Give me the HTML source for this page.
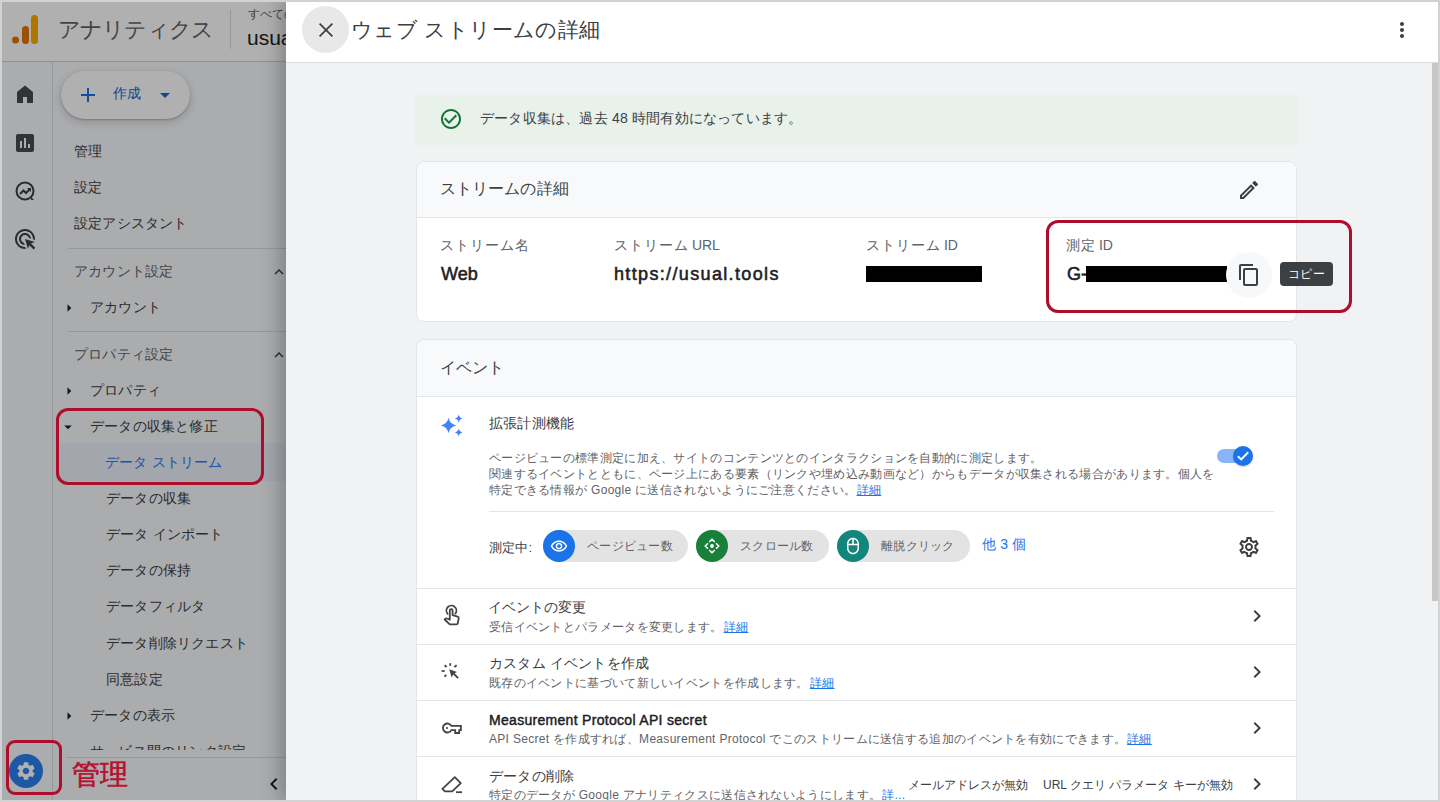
<!DOCTYPE html>
<html lang="ja">
<head>
<meta charset="utf-8">
<style>
*{box-sizing:border-box;margin:0;padding:0}
html,body{width:1440px;height:802px;overflow:hidden;background:#fff}
body{font-family:"Liberation Sans",sans-serif;color:#3c4043;position:relative}
.a{position:absolute;white-space:nowrap}
svg{display:block}
/* base page */
#base{position:absolute;left:0;top:0;width:286px;height:802px;background:#f8fafd;overflow:hidden}
#overlay{position:absolute;left:0;top:0;width:286px;height:802px;background:rgba(0,0,0,0.31)}
.nav{font-size:14px;letter-spacing:0.2px;color:#3c4043}
.sec{font-size:14px;letter-spacing:0.2px;color:#5f6368}
/* drawer */
#drawer{position:absolute;left:286px;top:0;width:1154px;height:802px;background:#f1f2f4;overflow:hidden;box-shadow:-6px 0 18px rgba(0,0,0,0.25)}
#dhead{position:absolute;left:0;top:0;width:1154px;height:63px;background:#fff;border-bottom:1px solid #dadce0}
.card{position:absolute;left:130px;width:881px;background:#fff;border:1px solid #e3e5e8;border-radius:8px;overflow:hidden}
.chead{position:absolute;left:0;top:0;width:100%;background:#f8f9fa;border-bottom:1px solid #e3e5e8}
.lbl{font-size:14px;color:#5f6368;letter-spacing:1px}
.val{font-size:18px;font-weight:normal;color:#202124;-webkit-text-stroke:0.55px #202124}
.t14{font-size:14px;letter-spacing:0.2px;color:#3c4043}
.t12{font-size:12px;letter-spacing:0.3px;color:#5f6368}
.link{color:#1a73e8;text-decoration:underline}
.row{position:absolute;left:0;width:100%;height:56px;border-top:1px solid #e3e5e8}
.chip{position:absolute;top:0;height:32px;border-radius:16px;background:#e3e3e3}
.chip .ic{position:absolute;left:0;top:0;width:32px;height:32px;border-radius:16px}
.chip .tx{position:absolute;left:44px;top:8px;font-size:12px;letter-spacing:0.3px;color:#5f6368}
.redbox{position:absolute;border:3.8px solid #ad0e2c;border-radius:12px}
#frame{position:absolute;left:0;top:0;width:1440px;height:802px;border:2px solid #d2d2d2;border-right-width:2px;pointer-events:none}
</style>
</head>
<body>
<div id="base">
  <!-- header -->
  <div class="a" style="left:0;top:0;width:286px;height:62px;border-bottom:1px solid #d0d2d5;background:#fff"></div>
  <svg class="a" style="left:11px;top:14px" width="30" height="30" viewBox="0 0 30 30">
    <rect x="20" y="1" width="7" height="29" rx="3.5" fill="#f9ab00"/>
    <rect x="11" y="12" width="7" height="18" rx="3.5" fill="#e37400"/>
    <circle cx="4.5" cy="26" r="3.5" fill="#e37400"/>
  </svg>
  <div class="a" style="left:58px;top:15px;font-size:22px;color:#5f6368;letter-spacing:-0.85px">アナリティクス</div>
  <div class="a" style="left:230px;top:10px;width:1px;height:39px;background:#dadce0"></div>
  <div class="a" style="left:248px;top:6px;font-size:12px;color:#5f6368">すべてのアカウント</div>
  <div class="a" style="left:247px;top:26px;font-size:21px;color:#202124">usual.tools</div>
  <!-- rail -->
  <div class="a" style="left:52px;top:62px;width:1px;height:740px;background:#dadce0"></div>
  <svg class="a" style="left:13px;top:82px" width="24" height="24" viewBox="0 0 24 24"><path fill="#474a4e" d="M4 21V10l8-6.5L20 10v11h-6v-6h-4v6z"/></svg>
  <svg class="a" style="left:13px;top:131px" width="24" height="24" viewBox="0 0 24 24"><path fill="#474a4e" d="M19 3H5c-1.1 0-2 .9-2 2v14c0 1.1.9 2 2 2h14c1.1 0 2-.9 2-2V5c0-1.1-.9-2-2-2zM9 17H7v-7h2v7zm4 0h-2V7h2v10zm4 0h-2v-4h2v4z"/></svg>
  <svg class="a" style="left:13px;top:179px" width="24" height="24" viewBox="0 0 24 24"><circle cx="12" cy="12" r="8.5" fill="none" stroke="#3c4043" stroke-width="2"/><path d="M7 15l3.5-3.5 2.5 2.5 4-4" fill="none" stroke="#3c4043" stroke-width="2"/><path d="M14 9h4v4z" fill="#3c4043"/><path d="M18 18l3 3h-3z" fill="#3c4043"/></svg>
  <svg class="a" style="left:13px;top:227px" width="24" height="24" viewBox="0 0 24 24"><path fill="#3c4043" d="M11.71 17.99C8.53 17.84 6 15.22 6 12c0-3.31 2.69-6 6-6 3.22 0 5.840 2.53 5.99 5.71l-2.1-.63C15.48 9.31 13.89 8 12 8c-2.21 0-4 1.79-4 4 0 1.89 1.31 3.48 3.08 3.89l.63 2.1zM22 12c0 .3-.01.6-.04.9l-1.97-.59c.01-.1.01-.21.01-.31 0-4.42-3.58-8-8-8s-8 3.58-8 8 3.58 8 8 8c.1 0 .21 0 .31-.01l.59 1.97c-.3.03-.6.04-.9.04-5.52 0-10-4.48-10-10S6.48 2 12 2s10 4.48 10 10zm-3.77 4.26L22 15l-10-3 3 10 1.26-3.77 4.27 4.27 1.770-1.77-4.27-4.27z"/></svg>
  <!-- create button -->
  <div class="a" style="left:61px;top:71px;width:129px;height:48px;border-radius:24px;background:#fff;box-shadow:0 1px 2px rgba(0,0,0,0.22),0 3px 8px 2px rgba(0,0,0,0.12)"></div>
  <svg class="a" style="left:76px;top:83px" width="24" height="24" viewBox="0 0 24 24"><path fill="#1a73e8" d="M19 13h-6v6h-2v-6H5v-2h6V5h2v6h6v2z"/></svg>
  <div class="a" style="left:113px;top:85px;font-size:14px;color:#1967d2;letter-spacing:0.2px">作成</div>
  <svg class="a" style="left:153px;top:83px" width="24" height="24" viewBox="0 0 24 24"><path fill="#1967d2" d="M7 10l5 5 5-5z"/></svg>
  <!-- nav -->
  <div class="a nav" style="left:74px;top:143px">管理</div>
  <div class="a nav" style="left:74px;top:179px">設定</div>
  <div class="a nav" style="left:74px;top:215px">設定アシスタント</div>
  <div class="a" style="left:68px;top:248px;width:218px;height:1px;background:#dadce0"></div>
  <div class="a sec" style="left:74px;top:263px">アカウント設定</div>
  <svg class="a" style="left:270px;top:263px" width="18" height="18" viewBox="0 0 24 24"><path fill="#3c4043" d="M12 8l-6 6 1.41 1.41L12 10.83l4.59 4.58L18 14z"/></svg>
  <svg class="a" style="left:60px;top:299px" width="18" height="18" viewBox="0 0 24 24"><path fill="#202124" d="M10 17l5-5-5-5v10z"/></svg>
  <div class="a nav" style="left:90px;top:299px">アカウント</div>
  <div class="a" style="left:68px;top:331px;width:218px;height:1px;background:#dadce0"></div>
  <div class="a sec" style="left:74px;top:346px">プロパティ設定</div>
  <svg class="a" style="left:270px;top:346px" width="18" height="18" viewBox="0 0 24 24"><path fill="#3c4043" d="M12 8l-6 6 1.41 1.41L12 10.83l4.59 4.58L18 14z"/></svg>
  <svg class="a" style="left:60px;top:382px" width="18" height="18" viewBox="0 0 24 24"><path fill="#202124" d="M10 17l5-5-5-5v10z"/></svg>
  <div class="a nav" style="left:90px;top:382px">プロパティ</div>
  <svg class="a" style="left:59px;top:418px" width="18" height="18" viewBox="0 0 24 24"><path fill="#202124" d="M7 10l5 5 5-5z"/></svg>
  <div class="a nav" style="left:90px;top:418px">データの収集と修正</div>
  <div class="a" style="left:56px;top:443px;width:230px;height:38px;background:#ecf1fb"></div>
  <div class="a nav" style="left:105px;top:454px;color:#2a7af0">データ ストリーム</div>
  <div class="a nav" style="left:106px;top:490px">データの収集</div>
  <div class="a nav" style="left:106px;top:526px">データ インポート</div>
  <div class="a nav" style="left:106px;top:562px">データの保持</div>
  <div class="a nav" style="left:106px;top:598px">データフィルタ</div>
  <div class="a nav" style="left:106px;top:635px">データ削除リクエスト</div>
  <div class="a nav" style="left:106px;top:671px">同意設定</div>
  <svg class="a" style="left:60px;top:707px" width="18" height="18" viewBox="0 0 24 24"><path fill="#202124" d="M10 17l5-5-5-5v10z"/></svg>
  <div class="a nav" style="left:90px;top:707px">データの表示</div>
  <div class="a nav" style="left:90px;top:743px">サービス間のリンク設定</div>
  <div class="a" style="left:53px;top:750px;width:233px;height:52px;background:#f8fafd"></div>
  <div class="a" style="left:66px;top:757px;width:220px;height:1px;background:#dadce0"></div>
  <svg class="a" style="left:262px;top:772px" width="24" height="24" viewBox="0 0 24 24"><path fill="#202124" d="M15.41 7.41L14 6l-6 6 6 6 1.41-1.41L10.83 12z"/></svg>
  <div class="a" style="left:9px;top:754px;width:34px;height:34px;border-radius:17px;background:#2a80f0"></div>
  <svg class="a" style="left:15px;top:760px" width="22" height="22" viewBox="0 0 24 24"><path fill="#fff" d="M19.14 12.94c.04-.3.06-.61.06-.94 0-.32-.02-.64-.07-.94l2.03-1.58c.18-.14.23-.41.12-.61l-1.92-3.32c-.12-.22-.37-.29-.59-.22l-2.39.96c-.5-.38-1.030-.7-1.62-.94l-.36-2.54c-.04-.24-.24-.41-.48-.41h-3.84c-.24 0-.43.17-.47.41l-.36 2.54c-.59.24-1.13.57-1.62.94l-2.39-.96c-.22-.08-.47 0-.59.22L2.74 8.87c-.12.21-.08.47.12.61l2.03 1.58c-.05.3-.09.63-.09.94s.02.64.07.94l-2.03 1.58c-.18.14-.23.41-.12.61l1.92 3.32c.12.22.37.29.59.22l2.39-.96c.5.38 1.03.7 1.62.94l.36 2.54c.05.24.24.41.48.41h3.84c.24 0 .44-.17.47-.41l.36-2.54c.59-.24 1.13-.56 1.62-.94l2.39.96c.22.08.47 0 .59-.22l1.92-3.32c.12-.22.07-.47-.12-.61l-2.01-1.58zM12 15.6c-1.98 0-3.6-1.62-3.6-3.6s1.62-3.6 3.6-3.6 3.6 1.62 3.6 3.6-1.62 3.6-3.6 3.6z"/></svg>
</div>
<div id="overlay"></div>

<div id="drawer">
  <div id="dhead">
    <div class="a" style="left:16px;top:6px;width:47px;height:47px;border-radius:50%;background:#e8e8e8"></div>
    <svg class="a" style="left:28px;top:18px" width="24" height="24" viewBox="0 0 24 24"><path stroke="#3c4043" stroke-width="1.7" d="M5.6 5.6L18.4 18.4M18.4 5.6L5.6 18.4"/></svg>
    <div class="a" style="left:65px;top:16px;font-size:21px;color:#3c4043;letter-spacing:0.4px">ウェブ ストリームの詳細</div>
    <svg class="a" style="left:1104px;top:18px" width="24" height="24" viewBox="0 0 24 24"><path fill="#3c4043" d="M12 8c1.1 0 2-.9 2-2s-.9-2-2-2-2 .9-2 2 .9 2 2 2zm0 2c-1.1 0-2 .9-2 2s.9 2 2 2 2-.9 2-2-.9-2-2-2zm0 6c-1.1 0-2 .9-2 2s.9 2 2 2 2-.9 2-2-.9-2-2-2z"/></svg>
  </div>
  <!-- scrollbar -->
  <div class="a" style="left:1146px;top:63px;width:6px;height:538px;background:#c6c6c6"></div>
  <!-- green banner -->
  <div class="a" style="left:131px;top:97px;width:879px;height:46px;background:#e8f1ea;box-shadow:0 0 3px 2px #e9f1eb"></div>
  <svg class="a" style="left:153px;top:107px" width="24" height="24" viewBox="0 0 24 24"><path fill="#137333" d="M16.59 7.58L10 14.17l-3.59-3.58L5 12l5 5 8-8zM12 2C6.48 2 2 6.480 2 12s4.48 10 10 10 10-4.48 10-10S17.52 2 12 2zm0 18c-4.42 0-8-3.58-8-8s3.58-8 8-8 8 3.58 8 8-3.58 8-8 8z"/></svg>
  <div class="a t14" style="left:194px;top:110px">データ収集は、過去 48 時間有効になっています。</div>

  <!-- stream details card -->
  <div class="card" style="top:161px;height:161px">
    <div class="chead" style="height:56px"></div>
    <div class="a" style="left:23px;top:17px;font-size:16px;color:#3c4043;letter-spacing:0.1px">ストリームの詳細</div>
    <svg class="a" style="left:820px;top:16px" width="24" height="24" viewBox="0 0 24 24"><path fill="#3c4043" d="M14.06 9.02l.92.92L5.92 19H5v-.92l9.06-9.06M17.66 3c-.25 0-.51.1-.7.29l-1.83 1.830 3.75 3.75 1.83-1.83c.39-.39.39-1.02 0-1.41l-2.34-2.34c-.2-.2-.45-.29-.71-.29zm-3.6 3.19L3 17.25V21h3.75L17.81 9.94l-3.75-3.75z"/></svg>
    <div class="a lbl" style="left:23px;top:75px">ストリーム名</div>
    <div class="a val" style="left:24px;top:102px">Web</div>
    <div class="a lbl" style="left:197px;top:75px">ストリーム<span style="letter-spacing:0;margin-left:-1px"> URL</span></div>
    <div class="a val" style="left:197px;top:102px;letter-spacing:1.35px">https://usual.tools</div>
    <div class="a lbl" style="left:449px;top:75px">ストリーム<span style="letter-spacing:0;margin-left:-1px"> ID</span></div>
    <div class="a" style="left:449px;top:104px;width:116px;height:16px;background:#000"></div>
    <div class="a lbl" style="left:649px;top:75px">測定<span style="letter-spacing:0;margin-left:-1px"> ID</span></div>
    <div class="a val" style="left:650px;top:102px">G-</div>
    <div class="a" style="left:669px;top:104px;width:141px;height:16px;background:#000"></div>
    <div class="a" style="left:809px;top:90px;width:46px;height:46px;border-radius:50%;background:#f7f8f9"></div>
    <svg class="a" style="left:820px;top:101px" width="24" height="24" viewBox="0 0 24 24"><path fill="#3c4043" d="M16 1H4c-1.1 0-2 .9-2 2v14h2V3h12V1zm3 4H8c-1.1 0-2 .9-2 2v14c0 1.1.9 2 2 2h11c1.1 0 2-.9 2-2V7c0-1.1-.9-2-2-2zm0 16H8V7h11v14z"/></svg>
  </div>
  <div class="a" style="left:994px;top:262px;width:53px;height:24px;border-radius:4px;background:#3c4043;color:#fff;font-size:12px;line-height:24px;text-align:center;letter-spacing:0.3px">コピー</div>

  <!-- events card -->
  <div class="card" style="top:339px;height:480px">
    <div class="chead" style="height:57px"></div>
    <div class="a" style="left:23px;top:18px;font-size:16px;color:#3c4043">イベント</div>
    <svg class="a" style="left:19px;top:68px" width="34" height="34" viewBox="0 0 34 34"><path fill="#4583f0" d="M12.5,9.799999999999999 Q13.868,16.032 20.1,17.4 Q13.868,18.767999999999997 12.5,25.0 Q11.132,18.767999999999997 4.9,17.4 Q11.132,16.032 12.5,9.799999999999999Z M22.7,6.4 Q23.419999999999998,9.68 26.7,10.4 Q23.419999999999998,11.120000000000001 22.7,14.4 Q21.98,11.120000000000001 18.7,10.4 Q21.98,9.68 22.7,6.4Z M22.7,20.7 Q23.366,23.733999999999998 26.4,24.4 Q23.366,25.066 22.7,28.099999999999998 Q22.034,25.066 19.0,24.4 Q22.034,23.733999999999998 22.7,20.7Z"/></svg>
    <div class="a t14" style="left:72px;top:75px">拡張計測機能</div>
    <div class="a t12" style="left:72px;top:110px;line-height:16px;white-space:normal;width:750px">ページビューの標準測定に加え、サイトのコンテンツとのインタラクションを自動的に測定します。<br>関連するイベントとともに、ページ上にある要素（リンクや埋め込み動画など）からもデータが収集される場合があります。個人を<br>特定できる情報が Google に送信されないようにご注意ください。<span class="link" style="color:#1a73e8">詳細</span></div>
    <!-- toggle -->
    <div class="a" style="left:800px;top:109px;width:30px;height:14px;border-radius:7px;background:#8ab4f8"></div>
    <div class="a" style="left:816px;top:106px;width:20px;height:20px;border-radius:50%;background:#1a73e8;box-shadow:0 1px 2px rgba(0,0,0,0.2)"></div>
    <svg class="a" style="left:818px;top:108px" width="16" height="16" viewBox="0 0 16 16"><path fill="none" stroke="#fff" stroke-width="2" d="M2.8 8.2L6.2 11.4L13.2 4.2"/></svg>
    <div class="a" style="left:72px;top:171px;width:785px;height:1px;background:#e3e5e8"></div>
    <div class="a t14" style="left:72px;top:199px;font-size:13px">測定中:</div>
    <div class="chip" style="left:126px;top:190px;width:145px"><div class="ic" style="background:#1a73e8"></div><svg class="a" style="left:7px;top:7px" width="18" height="18" viewBox="0 0 24 24"><path fill="#fff" d="M12 6.5c3.79 0 7.17 2.13 8.82 5.5-1.65 3.37-5.02 5.5-8.82 5.5S4.83 15.37 3.18 12C4.83 8.63 8.21 6.5 12 6.5m0-2C7 4.5 2.73 7.61 1 12c1.73 4.39 6 7.5 11 7.5s9.27-3.11 11-7.5c-1.73-4.39-6-7.5-11-7.5zm0 5c1.38 0 2.5 1.12 2.5 2.5s-1.12 2.5-2.5 2.5-2.5-1.12-2.5-2.5 1.12-2.5 2.5-2.5m0-2c-2.48 0-4.5 2.02-4.5 4.5s2.02 4.5 4.5 4.5 4.5-2.02 4.5-4.5-2.02-4.5-4.5-4.5z"/></svg><div class="tx">ページビュー数</div></div>
    <div class="chip" style="left:279px;top:190px;width:133px"><div class="ic" style="background:#188038"></div><svg class="a" style="left:7px;top:7px" width="18" height="18" viewBox="0 0 24 24"><g fill="none" stroke="#fff" stroke-width="2.2" stroke-linecap="round" stroke-linejoin="round"><path d="M9 6L12 3L15 6M9 18L12 21L15 18M6 9L3 12L6 15M18 9L21 12L18 15"/></g><circle cx="12" cy="12" r="2.6" fill="#fff"/></svg><div class="tx">スクロール数</div></div>
    <div class="chip" style="left:420px;top:190px;width:133px"><div class="ic" style="background:#12857d"></div><svg class="a" style="left:7px;top:7px" width="18" height="18" viewBox="0 0 24 24"><path fill="#fff" d="M20 9c-.04-4.39-3.6-7.93-8-7.93S4.04 4.61 4 9v6c0 4.42 3.58 8 8 8s8-3.58 8-8V9zm-2 0h-5V3.16c2.81.47 4.96 2.9 5 5.84zm-7-5.84V9H6c.04-2.94 2.19-5.37 5-5.84zM18 15c0 3.31-2.69 6-6 6s-6-2.69-6-6v-4h12v4z"/></svg><div class="tx">離脱クリック</div></div>
    <div class="a t14" style="left:565px;top:196px;color:#1a73e8">他 3 個</div>
    <svg class="a" style="left:820px;top:195px" width="24" height="24" viewBox="0 0 24 24"><path fill="#3c4043" d="M19.43 12.98c.04-.32.07-.64.07-.98 0-.34-.03-.66-.07-.98l2.11-1.65c.19-.15.24-.42.12-.64l-2-3.46c-.09-.16-.26-.25-.44-.25-.06 0-.12.01-.17.03l-2.49 1c-.52-.4-1.08-.73-1.69-.98l-.38-2.65C14.46 2.18 14.25 2 14 2h-4c-.25 0-.46.18-.49.42l-.38 2.65c-.61.25-1.17.59-1.69.98l-2.49-1c-.06-.02-.12-.03-.18-.03-.17 0-.34.09-.43.25l-2 3.46c-.13.22-.07.49.12.64l2.11 1.65c-.04.32-.07.65-.07.98 0 .33.03.66.07.98l-2.11 1.65c-.19.15-.24.42-.12.64l2 3.46c.09.16.26.25.44.25.06 0 .12-.01.17-.03l2.49-1c.52.4 1.08.73 1.69.98l.38 2.65c.03.24.24.42.49.42h4c.25 0 .46-.18.49-.42l.38-2.65c.61-.25 1.17-.59 1.69-.98l2.49 1c.06.02.12.03.18.03.17 0 .34-.09.43-.25l2-3.46c.12-.22.07-.49-.12-.64l-2.11-1.65zm-1.98-1.71c.04.31.05.52.05.73 0 .21-.02.43-.05.73l-.14 1.13.89.7 1.08.84-.7 1.21-1.27-.51-1.04-.42-.9.68c-.43.32-.84.56-1.25.73l-1.06.43-.16 1.13-.2 1.35h-1.4l-.19-1.35-.16-1.13-1.06-.43c-.43-.18-.83-.41-1.23-.71l-.91-.7-1.06.43-1.27.51-.7-1.21 1.08-.84.89-.7-.14-1.13c-.03-.31-.05-.54-.05-.74s.02-.43.05-.73l.14-1.13-.89-.7-1.08-.84.7-1.21 1.27.51 1.04.42.9-.68c.43-.32.84-.56 1.25-.73l1.06-.43.16-1.13.2-1.35h1.39l.19 1.35.16 1.13 1.06.43c.43.18.83.41 1.23.71l.91.7 1.06-.43 1.27-.51.7 1.21-1.07.85-.89.7.14 1.130zM12 8c-2.21 0-4 1.79-4 4s1.79 4 4 4 4-1.79 4-4-1.79-4-4-4zm0 6c-1.1 0-2-.9-2-2s.9-2 2-2 2 .9 2 2-.9 2-2 2z"/></svg>

    <div class="row" style="top:248px"></div>
    <svg class="a" style="left:19px;top:258px" width="32" height="32" viewBox="0 0 32 32"><g fill="none" stroke="#444" stroke-width="1.8" stroke-linejoin="round" stroke-linecap="round"><path d="M11.6 15.8 A5 5 0 1 1 19.4 15.6"/><path d="M13.8 21.6 V12.6 a1.4 1.4 0 0 1 2.8 0 V17.2 L21.6 18.6 a1.6 1.6 0 0 1 1.1 1.8 L21.9 25 a1.6 1.6 0 0 1 -1.6 1.3 H13.8 L8.6 21.5 l0.9 -0.8 a1.4 1.4 0 0 1 1.5 -0.2 Z"/></g></svg>
    <div class="a t14" style="left:71px;top:259px;letter-spacing:0">イベントの変更</div>
    <div class="a t12" style="left:72px;top:279px">受信イベントとパラメータを変更します。<span class="link" style="margin-left:1px">詳細</span></div>
    <svg class="a" style="left:828px;top:264px" width="24" height="24" viewBox="0 0 24 24"><path fill="#3c4043" d="M10 6L8.59 7.41 13.17 12l-4.58 4.59L10 18l6-6z"/></svg>

    <div class="row" style="top:304px"></div>
    <svg class="a" style="left:19px;top:315px" width="32" height="32" viewBox="0 0 32 32"><path fill="#444" d="M13.2 14.2 L21 16.9 L18.6 18.2 L22.8 22.4 L21.4 23.8 L17.2 19.6 L15.6 22.6 Z"/><g stroke="#444" stroke-width="1.8" stroke-linecap="butt"><path d="M14.2 8.2 V10.8"/><path d="M8.6 10.3 L10.6 12"/><path d="M5.6 16 H8.6"/><path d="M8.4 21.6 L10.4 19.8"/><path d="M18.4 12 L20.6 10.2"/></g></svg>
    <div class="a t14" style="left:72px;top:315px">カスタム イベントを作成</div>
    <div class="a t12" style="left:72px;top:335px">既存のイベントに基づいて新しいイベントを作成します。<span class="link" style="margin-left:1px">詳細</span></div>
    <svg class="a" style="left:828px;top:320px" width="24" height="24" viewBox="0 0 24 24"><path fill="#3c4043" d="M10 6L8.59 7.41 13.17 12l-4.58 4.59L10 18l6-6z"/></svg>

    <div class="row" style="top:360px"></div>
    <svg class="a" style="left:19px;top:372px" width="32" height="32" viewBox="0 0 32 32"><g fill="none" stroke="#444" stroke-width="1.8" stroke-linejoin="miter"><path d="M15.4 13.9 H24.9 V18.1 H23.2 V21 H19.2 V18.1 H15.4 A4.5 4.5 0 1 1 15.4 13.9 Z"/></g><circle cx="11" cy="16" r="1.1" fill="#444"/></svg>
    <div class="a t14" style="left:72px;top:372px;font-weight:normal;color:#202124;-webkit-text-stroke:0.45px #202124;letter-spacing:0.3px">Measurement Protocol API secret</div>
    <div class="a t12" style="left:72px;top:391px">API Secret を作成すれば、Measurement Protocol でこのストリームに送信する追加のイベントを有効にできます。<span class="link" style="margin-left:1px">詳細</span></div>
    <svg class="a" style="left:828px;top:376px" width="24" height="24" viewBox="0 0 24 24"><path fill="#3c4043" d="M10 6L8.59 7.41 13.17 12l-4.58 4.59L10 18l6-6z"/></svg>

    <div class="row" style="top:416px"></div>
    <svg class="a" style="left:19px;top:428px" width="32" height="32" viewBox="0 0 32 32"><g fill="none" stroke="#444" stroke-width="1.8" stroke-linejoin="round"><path d="M18.8 9.2 L24.8 15.2 L16.2 23.4 H9 L6.4 20.8 Z"/></g><path d="M20 23.3 H26 V25.1 H20z" fill="#444"/></svg>
    <div class="a t14" style="left:72px;top:428px">データの削除</div>
    <div class="a t12" style="left:72px;top:447px">特定のデータが Google アナリティクスに送信されないようにします。<span class="link" style="margin-left:1px">詳...</span></div>
    <div class="a t12" style="left:483px;top:437px;padding:0 8px;background:#fff;color:#3c4043;letter-spacing:0">メールアドレスが無効</div>
    <div class="a t12" style="left:618px;top:437px;padding:0 8px;background:#fff;color:#3c4043;letter-spacing:0">URL クエリ パラメータ キーが無効</div>
    <svg class="a" style="left:828px;top:432px" width="24" height="24" viewBox="0 0 24 24"><path fill="#3c4043" d="M10 6L8.59 7.41 13.17 12l-4.58 4.59L10 18l6-6z"/></svg>
  </div>
</div>

<!-- annotations -->
<div class="redbox" style="left:56px;top:408px;width:208px;height:77px"></div>
<div class="redbox" style="left:1046px;top:220px;width:306px;height:93px"></div>
<div class="redbox" style="left:6px;top:740px;width:56px;height:55px;border-radius:9px"></div>
<div class="a" style="left:72px;top:756px;font-size:28px;color:#b80f2e;-webkit-text-stroke:0.6px #b80f2e">管理</div>
<div id="frame"></div>
</body>
</html>
